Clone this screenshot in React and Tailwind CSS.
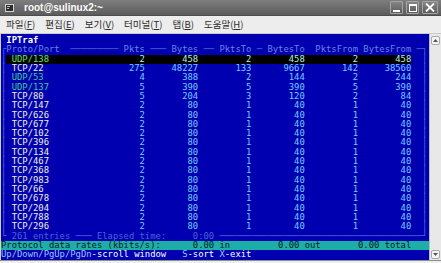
import React from 'react';

const C = {
  dim: 'text-[#5468dc]',
  hdr: 'text-[#6c82e6]',
  foot: 'text-[#4d63d6]',
  white: 'text-white font-bold',
  tcp: 'text-[#f0f0d4]',
  udp: 'text-[#3ccb8c]',
  udpHi: 'text-[#62e262]',
  num: 'text-[#74ccff]',
  numHi: 'text-[#b0f2de]',
  dark: 'text-[#062020]',
  key: 'text-[#a4c2ff]',
  desc: 'text-white',
};

function makeRow(parts, def) {
  const cells = Array.from({ length: 80 }, () => ({ ch: ' ', cls: def, bg: '' }));
  for (const [col, text, cls] of parts) {
    [...text].forEach((ch, i) => {
      const c = cells[col + i];
      if (c) {
        c.ch = ch;
        c.cls = cls;
      }
    });
  }
  return cells;
}

const ra = (end, v, cls) => {
  const s = String(v);
  return [end - s.length + 1, s, cls];
};

const data = [
  ['UDP/138', 2, 458, 2, 458, 2, 458],
  ['TCP/22', 275, 48227, 133, 9667, 142, 38560],
  ['UDP/53', 4, 388, 2, 144, 2, 244],
  ['UDP/137', 5, 390, 5, 390, 5, 390],
  ['TCP/80', 5, 204, 3, 120, 2, 84],
  ['TCP/147', 2, 80, 1, 40, 1, 40],
  ['TCP/626', 2, 80, 1, 40, 1, 40],
  ['TCP/677', 2, 80, 1, 40, 1, 40],
  ['TCP/102', 2, 80, 1, 40, 1, 40],
  ['TCP/396', 2, 80, 1, 40, 1, 40],
  ['TCP/134', 2, 80, 1, 40, 1, 40],
  ['TCP/467', 2, 80, 1, 40, 1, 40],
  ['TCP/368', 2, 80, 1, 40, 1, 40],
  ['TCP/983', 2, 80, 1, 40, 1, 40],
  ['TCP/66', 2, 80, 1, 40, 1, 40],
  ['TCP/678', 2, 80, 1, 40, 1, 40],
  ['TCP/204', 2, 80, 1, 40, 1, 40],
  ['TCP/788', 2, 80, 1, 40, 1, 40],
  ['TCP/296', 2, 80, 1, 40, 1, 40],
];

function buildRows() {
  const rows = [];
  rows.push({ cells: makeRow([[1, 'IPTraf', C.white]], C.dim) });
  rows.push({
    cells: makeRow(
      [
        [0, '┌', C.dim],
        [1, 'Proto/Port', C.hdr],
        [13, '─'.repeat(9), C.dim],
        [23, 'Pkts', C.hdr],
        [28, '───', C.dim],
        [32, 'Bytes', C.hdr],
        [38, '──', C.dim],
        [41, 'PktsTo', C.hdr],
        [48, '─', C.dim],
        [50, 'BytesTo', C.hdr],
        [59, 'PktsFrom', C.hdr],
        [68, 'BytesFrom', C.hdr],
        [78, '─', C.dim],
        [79, '┐', C.dim],
      ],
      C.dim
    ),
  });
  data.forEach((d, idx) => {
    const hi = idx === 0;
    const isUdp = d[0].startsWith('UDP');
    const lc = hi ? C.udpHi : isUdp ? C.udp : C.tcp;
    const nc = hi ? C.numHi : C.num;
    const cells = makeRow(
      [
        [0, '│', C.dim],
        [2, d[0], lc],
        ra(26, d[1], nc),
        ra(36, d[2], nc),
        ra(46, d[3], nc),
        ra(56, d[4], nc),
        ra(66, d[5], nc),
        ra(76, d[6], nc),
        [79, '│', C.dim],
      ],
      nc
    );
    if (hi) {
      for (let i = 1; i <= 76; i++) cells[i].bg = 'bg-black';
    }
    rows.push({ cells });
  });
  rows.push({
    cells: makeRow(
      [
        [0, '└', C.dim],
        [2, '261 entries', C.foot],
        [14, '───', C.dim],
        [18, 'Elapsed time:', C.foot],
        [36, '0:00', C.foot],
        [41, '─'.repeat(38), C.dim],
        [79, '┘', C.dim],
      ],
      C.dim
    ),
  });
  rows.push({
    rowBg: 'bg-[#1eaea8]',
    cells: makeRow(
      [
        [0, 'Protocol data rates (kbits/s):', C.dark],
        [36, '0.00', C.dark],
        [41, 'in', C.dark],
        [52, '0.00', C.dark],
        [57, 'out', C.dark],
        [67, '0.00', C.dark],
        [72, 'total', C.dark],
      ],
      C.dark
    ),
  });
  rows.push({
    cells: makeRow(
      [
        [0, 'Up/Down/PgUp/PgDn', C.key],
        [17, '-scroll window', C.desc],
        [34, 'S', C.key],
        [35, '-sort', C.desc],
        [41, 'X', C.key],
        [42, '-exit', C.desc],
      ],
      C.desc
    ),
  });
  return rows;
}

const rows = buildRows();

function Mn({ label, k }) {
  return (
    <span className="whitespace-nowrap">
      {label}(<span className="underline underline-offset-[1px]">{k}</span>)
    </span>
  );
}

function WinBtn({ children, w }) {
  return (
    <div
      className={`${w} h-[13px] border border-[#a4a4a4] rounded-[1px] bg-gradient-to-b from-[#858585] to-[#5c5c5c] flex items-center justify-center`}
    >
      {children}
    </div>
  );
}

export default function App() {
  return (
    <div className="w-[441px] h-[263px] overflow-hidden flex flex-col bg-[#ececec]">
      {/* title bar */}
      <div className="h-[16px] shrink-0 flex items-center bg-gradient-to-b from-[#7e7e7e] to-[#5c5c5c] border-b border-[#4c4c4c]">
        <div className="ml-[5px] w-[9px] h-[8px] border border-[#d4d4d4] bg-[#2c2c2c] flex flex-col gap-[1px] pt-[1px] pl-[1px]">
          <div className="w-[3px] h-px bg-[#bdbdbd]" />
          <div className="w-[2px] h-px bg-[#bdbdbd]" />
        </div>
        <div className="ml-[10px] text-[10px] leading-none font-bold text-white font-['Liberation_Sans',Arial,sans-serif]">
          root@sulinux2:~
        </div>
        <div className="ml-auto mr-[3px] flex gap-[3px]">
          <WinBtn w="w-[13px]">
            <div className="w-[7px] h-[2px] bg-white mt-[7px]" />
          </WinBtn>
          <WinBtn w="w-[13px]">
            <div className="w-[8px] h-[8px] border border-white border-t-2" />
          </WinBtn>
          <WinBtn w="w-[16px]">
            <svg width="10" height="9" viewBox="0 0 10 9">
              <path d="M1 0.5 L9 8.5 M9 0.5 L1 8.5" stroke="white" strokeWidth="1.8" />
            </svg>
          </WinBtn>
        </div>
      </div>

      {/* menu bar */}
      <div className="h-[18px] shrink-0 flex items-center gap-[10px] pl-[6px] bg-[#ededed] border-b border-[#cbcbcb] text-[9.5px] leading-none text-[#2c2c2c] font-['Noto_Sans_CJK_KR',sans-serif]">
        <Mn label="파일" k="F" />
        <Mn label="편집" k="E" />
        <Mn label="보기" k="V" />
        <Mn label="터미널" k="T" />
        <Mn label="탭" k="B" />
        <Mn label="도움말" k="H" />
      </div>

      {/* body */}
      <div className="h-[226px] shrink-0 flex">
        <div className="w-px bg-[#d0d0d0]" />
        <div className="w-[428px] bg-[#0000b0] pt-[2px] font-['DejaVu_Sans_Mono',monospace] text-[8.87px]">
          {rows.map((r, ri) => (
            <div key={ri} className={`flex h-[9.32px] leading-[9.32px] ${r.rowBg || ''}`}>
              {r.cells.map((c, ci) => (
                <span key={ci} className={`w-[5.34px] shrink-0 whitespace-pre ${c.cls} ${c.bg}`}>
                  {c.ch}
                </span>
              ))}
            </div>
          ))}
        </div>
        <div className="w-[12px] flex flex-col justify-between bg-[#e8e8e8] border-l border-[#bdbdbd] pt-[2px] pb-[1px]">
          <div className="ml-[1px] w-[9px] h-[9px] rounded-[2px] border border-[#a9a9a9] bg-[#f5f5f5] flex items-center justify-center">
            <svg width="5" height="3" viewBox="0 0 5 3">
              <path d="M0 3 L2.5 0 L5 3 Z" fill="#555" />
            </svg>
          </div>
          <div className="ml-[1px] w-[9px] h-[9px] rounded-[2px] border border-[#a9a9a9] bg-[#f5f5f5] flex items-center justify-center">
            <svg width="5" height="3" viewBox="0 0 5 3">
              <path d="M0 0 L2.5 3 L5 0 Z" fill="#555" />
            </svg>
          </div>
        </div>
      </div>
      <div className="h-px shrink-0 bg-[#8e8e8e]" />
      <div className="flex-1 bg-[#eeeeee]" />
    </div>
  );
}
